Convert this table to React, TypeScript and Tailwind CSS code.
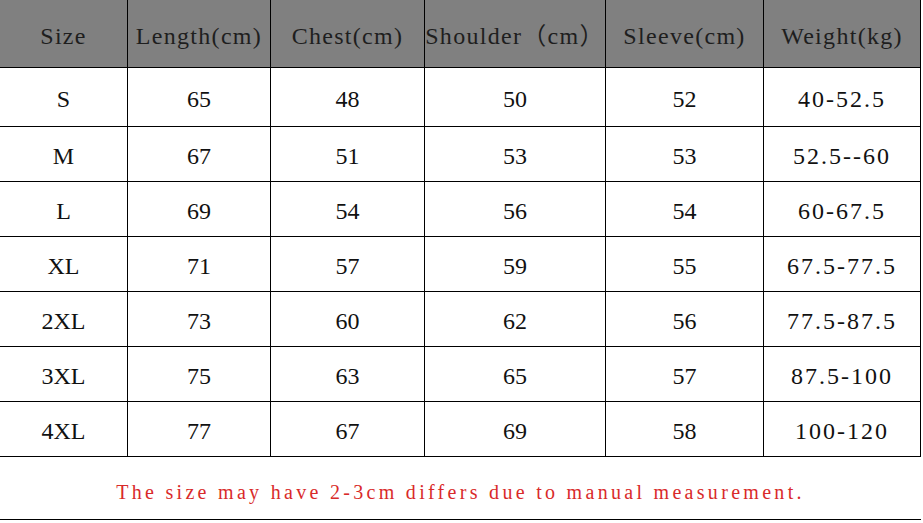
const HEADERS = ["Size", "Length(cm)", "Chest(cm)", "Shoulder（cm）", "Sleeve(cm)", "Weight(kg)"]

const ROWS: string[][] = [
  ["S", "65", "48", "50", "52", "40-52.5"],
  ["M", "67", "51", "53", "53", "52.5--60"],
  ["L", "69", "54", "56", "54", "60-67.5"],
  ["XL", "71", "57", "59", "55", "67.5-77.5"],
  ["2XL", "73", "60", "62", "56", "77.5-87.5"],
  ["3XL", "75", "63", "65", "57", "87.5-100"],
  ["4XL", "77", "67", "69", "58", "100-120"],
]

export default function App() {
  return (
    <div className="w-[923px] h-[523px] bg-white overflow-hidden font-['Liberation_Serif','Noto_Sans_CJK_SC',serif]">
      <div className="grid w-[921px] grid-cols-[128px_143px_154px_181px_158px_157px] grid-rows-[68px_59px_repeat(6,55px)_63px]">
        {HEADERS.map((h) => (
          <div
            key={h}
            className="flex items-center justify-center bg-[#808080] border-b border-r border-black text-[24px] tracking-[1.3px] text-[#1e1e1e] whitespace-nowrap pt-1"
          >
            {h}
          </div>
        ))}
        {ROWS.map((row) =>
          row.map((c, j) => (
            <div
              key={row[0] + j}
              className={`flex items-center justify-center border-b border-r border-black text-[24px] text-[#111] pt-1 ${j === 5 ? "tracking-[2px]" : ""}`}
            >
              {c}
            </div>
          ))
        )}
        <div className="col-span-6 flex items-center justify-center border-b border-black text-[20px] tracking-[3.3px] text-[#d92a2a] pt-2 whitespace-nowrap">
          The size may have 2-3cm differs due to manual measurement.
        </div>
      </div>
    </div>
  )
}
